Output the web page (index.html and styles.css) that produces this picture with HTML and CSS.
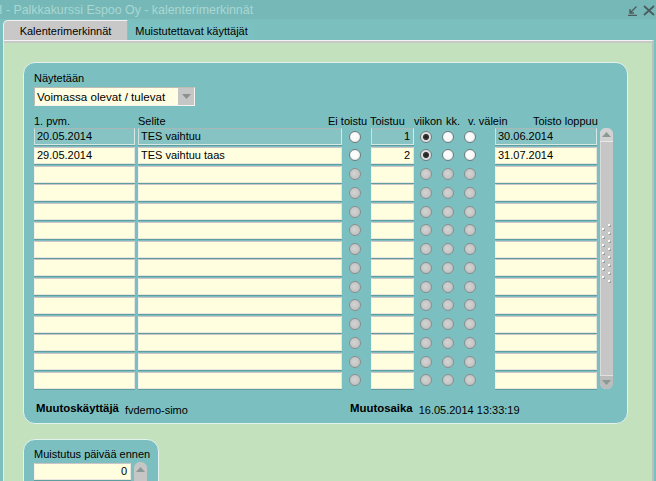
FILE: index.html
```html
<!DOCTYPE html>
<html lang="fi">
<head>
<meta charset="utf-8">
<title>Kalenterimerkinnät</title>
<link rel="stylesheet" href="styles.css">
</head>
<body>
<div class="titlebar">
  <span class="title">I - Palkkakurssi Espoo Oy - kalenterimerkinnät</span>
  <span class="controls">
    <svg class="ic-min" width="10" height="11" viewBox="0 0 10 11"><path d="M8.5 1.5 L2 8 M2 4 V8 H6 M0 10.5 H9" fill="none" stroke="#4c5c5c" stroke-width="1.4"/></svg>
    <svg class="ic-x" width="12" height="11" viewBox="0 0 12 11"><path d="M1 1 L11 10 M11 1 L1 10" fill="none" stroke="#4c5c5c" stroke-width="1.8"/></svg>
  </span>
</div>
<div class="tabs">
  <div class="tab active">Kalenterimerkinnät</div>
  <div class="tab">Muistutettavat käyttäjät</div>
</div>
<div class="main">
  <div class="panel">
    <div class="label">Näytetään</div>
    <div class="select"><span class="sel-text">Voimassa olevat / tulevat</span><span class="sel-btn"><svg width="9" height="5" viewBox="0 0 9 5"><path d="M0 0 H9 L4.5 5 Z" fill="#8c9090"/></svg></span></div>
    <div class="head">
      <span class="h1">1. pvm.</span><span class="h2">Selite</span><span class="h3">Ei toistu</span><span class="h4">Toistuu</span><span class="h5">viikon</span><span class="h6">kk.</span><span class="h7">v. välein</span><span class="h8">Toisto loppuu</span>
    </div>
    <div class="table">
      <div class="rows">
        <div class="row cur"><div class="f d">20.05.2014</div><div class="f s">TES vaihtuu</div><i class="r x"></i><div class="f n">1</div><i class="r v on"></i><i class="r k"></i><i class="r y"></i><div class="f l">30.06.2014</div></div>
        <div class="row"><div class="f d">29.05.2014</div><div class="f s">TES vaihtuu taas</div><i class="r x"></i><div class="f n">2</div><i class="r v on"></i><i class="r k"></i><i class="r y"></i><div class="f l">31.07.2014</div></div>
        <div class="row"><div class="f d"></div><div class="f s"></div><i class="r x e"></i><div class="f n"></div><i class="r v e"></i><i class="r k e"></i><i class="r y e"></i><div class="f l"></div></div>
        <div class="row"><div class="f d"></div><div class="f s"></div><i class="r x e"></i><div class="f n"></div><i class="r v e"></i><i class="r k e"></i><i class="r y e"></i><div class="f l"></div></div>
        <div class="row"><div class="f d"></div><div class="f s"></div><i class="r x e"></i><div class="f n"></div><i class="r v e"></i><i class="r k e"></i><i class="r y e"></i><div class="f l"></div></div>
        <div class="row"><div class="f d"></div><div class="f s"></div><i class="r x e"></i><div class="f n"></div><i class="r v e"></i><i class="r k e"></i><i class="r y e"></i><div class="f l"></div></div>
        <div class="row"><div class="f d"></div><div class="f s"></div><i class="r x e"></i><div class="f n"></div><i class="r v e"></i><i class="r k e"></i><i class="r y e"></i><div class="f l"></div></div>
        <div class="row"><div class="f d"></div><div class="f s"></div><i class="r x e"></i><div class="f n"></div><i class="r v e"></i><i class="r k e"></i><i class="r y e"></i><div class="f l"></div></div>
        <div class="row"><div class="f d"></div><div class="f s"></div><i class="r x e"></i><div class="f n"></div><i class="r v e"></i><i class="r k e"></i><i class="r y e"></i><div class="f l"></div></div>
        <div class="row"><div class="f d"></div><div class="f s"></div><i class="r x e"></i><div class="f n"></div><i class="r v e"></i><i class="r k e"></i><i class="r y e"></i><div class="f l"></div></div>
        <div class="row"><div class="f d"></div><div class="f s"></div><i class="r x e"></i><div class="f n"></div><i class="r v e"></i><i class="r k e"></i><i class="r y e"></i><div class="f l"></div></div>
        <div class="row"><div class="f d"></div><div class="f s"></div><i class="r x e"></i><div class="f n"></div><i class="r v e"></i><i class="r k e"></i><i class="r y e"></i><div class="f l"></div></div>
        <div class="row"><div class="f d"></div><div class="f s"></div><i class="r x e"></i><div class="f n"></div><i class="r v e"></i><i class="r k e"></i><i class="r y e"></i><div class="f l"></div></div>
        <div class="row"><div class="f d"></div><div class="f s"></div><i class="r x e"></i><div class="f n"></div><i class="r v e"></i><i class="r k e"></i><i class="r y e"></i><div class="f l"></div></div>
      </div>
      <div class="scrollbar">
        <span class="sb-up"><svg width="9" height="5" viewBox="0 0 9 5"><path d="M0 5 H9 L4.5 0 Z" fill="#8a9898"/></svg></span>
        <span class="sb-grip"><svg width="9" height="62" viewBox="0 0 9 62">
          <g fill="#8fa0a0"><rect x="1" y="7" width="2" height="2"/><rect x="1" y="15" width="2" height="2"/><rect x="1" y="23" width="2" height="2"/><rect x="1" y="31" width="2" height="2"/><rect x="1" y="39" width="2" height="2"/><rect x="1" y="47" width="2" height="2"/><rect x="1" y="55" width="2" height="2"/><rect x="7" y="3" width="2" height="2"/><rect x="7" y="11" width="2" height="2"/><rect x="7" y="19" width="2" height="2"/><rect x="7" y="27" width="2" height="2"/><rect x="7" y="35" width="2" height="2"/><rect x="7" y="43" width="2" height="2"/><rect x="7" y="51" width="2" height="2"/><rect x="7" y="59" width="2" height="2"/></g>
          <g fill="#ffffff"><rect x="0" y="6" width="2" height="2"/><rect x="0" y="14" width="2" height="2"/><rect x="0" y="22" width="2" height="2"/><rect x="0" y="30" width="2" height="2"/><rect x="0" y="38" width="2" height="2"/><rect x="0" y="46" width="2" height="2"/><rect x="0" y="54" width="2" height="2"/><rect x="6" y="2" width="2" height="2"/><rect x="6" y="10" width="2" height="2"/><rect x="6" y="18" width="2" height="2"/><rect x="6" y="26" width="2" height="2"/><rect x="6" y="34" width="2" height="2"/><rect x="6" y="42" width="2" height="2"/><rect x="6" y="50" width="2" height="2"/><rect x="6" y="58" width="2" height="2"/></g>
        </svg></span>
        <span class="sb-down"><svg width="9" height="5" viewBox="0 0 9 5"><path d="M0 0 H9 L4.5 5 Z" fill="#8a9898"/></svg></span>
      </div>
    </div>
    <div class="footer">
      <div class="fitem first"><b>Muutoskäyttäjä</b><span>fvdemo-simo</span></div>
      <div class="fitem"><b>Muutosaika</b><span>16.05.2014 13:33:19</span></div>
    </div>
  </div>
  <div class="panel small">
    <div class="label">Muistutus päivää ennen</div>
    <div class="spin-row">
      <div class="f days">0</div>
      <div class="spinner"><svg width="9" height="5" viewBox="0 0 9 5"><path d="M0 5 H9 L4.5 0 Z" fill="#8a9898"/></svg></div>
    </div>
  </div>
</div>
</body>
</html>
```

FILE: styles.css
```css
html, body {
  margin: 0;
  padding: 0;
}
body {
  width: 656px;
  height: 481px;
  overflow: hidden;
  background: #7bbfbf;
  font-family: "Liberation Sans", Arial, sans-serif;
  font-size: 11px;
  color: #000;
}
.titlebar {
  height: 19px;
  background: #75b8b7;
  display: flex;
  justify-content: space-between;
  align-items: center;
}
.title {
  color: #a9d7d3;
  font-size: 12.4px;
  margin-left: -1px;
  white-space: nowrap;
}
.controls {
  display: flex;
  align-items: center;
  gap: 5px;
  margin-right: 1px;
  padding-top: 1px;
}
.tabs {
  height: 21px;
  display: flex;
  align-items: flex-end;
  padding-left: 3px;
  gap: 2px;
}
.tab {
  box-sizing: border-box;
  height: 18px;
  width: 123px;
  text-align: center;
  line-height: 18px;
  background: #7cc1c1;
}
.tab.active {
  height: 20px;
  width: 125px;
  line-height: 20px;
  background: #c8c8c8;
  border-left: 1px solid #f2f2f2;
  border-top: 1px solid #f2f2f2;
  border-right: 1px solid #b0b0b0;
  border-top-left-radius: 5px;
}
.main {
  box-sizing: border-box;
  margin-left: 3px;
  margin-right: 2px;
  height: 441px;
  overflow: hidden;
  background: #c3e1bd;
  border-top: 1px solid #f4f4f4;
  border-left: 1px solid #e8ece8;
  border-right: 2px solid #b8c2bc;
  box-shadow: inset 0 2px 0 #c8c8c8;
  padding: 21px 0 0 19px;
}
.panel {
  box-sizing: border-box;
  width: 605px;
  height: 362px;
  background: #7bbfc0;
  border: 1px solid #e4f2ee;
  border-radius: 12px;
  padding: 8px 0 0 10px;
}
.label {
  height: 14px;
  line-height: 14px;
}
.select {
  box-sizing: border-box;
  margin-top: 2px;
  width: 161px;
  height: 19px;
  display: flex;
  background: #fffee2;
  border: 1px solid;
  border-color: #bcbcb4 #f4f4f0 #f4f4f0 #bcbcb4;
}
.sel-text {
  flex: 1;
  padding-left: 2px;
  line-height: 17px;
  font-size: 11.6px;
  white-space: nowrap;
}
.sel-btn {
  width: 16px;
  background: #c6c6c6;
  display: flex;
  align-items: center;
  justify-content: center;
}
.head {
  margin-top: 8px;
  height: 14px;
  line-height: 14px;
  display: flex;
  white-space: nowrap;
}
.h1 { width: 104px; }
.h2 { width: 190px; }
.h3 { width: 42px; }
.h4 { width: 44px; }
.h5 { width: 32px; }
.h6 { width: 22px; }
.h7 { width: 65px; }
.table {
  display: flex;
  align-items: flex-start;
}
.rows {
  display: flex;
  flex-direction: column;
  gap: 1.77px;
}
.row {
  display: flex;
  align-items: center;
  height: 17px;
}
.f {
  box-sizing: border-box;
  height: 17px;
  line-height: 15px;
  padding-left: 2px;
  white-space: nowrap;
  overflow: hidden;
  background: #ffffdf;
  border: 1px solid;
  border-color: #cdc4c8 #e6e6dc #e6e6dc #f2f2ea;
  box-shadow: 0 1px 0 #5f9e9e;
}
.row.cur .f {
  background: #87c3c3;
  border-color: #a8b8b8 #d8e8e4 #d8e8e4 #d0e0dc;
}
.d { width: 101px; }
.s { width: 204px; margin-left: 3px; }
.n { width: 43px; margin-left: 10px; text-align: right; padding-right: 3px; }
.l { width: 102px; margin-left: 19px; }
.r {
  display: block;
  box-sizing: border-box;
  width: 12px;
  height: 12px;
  border-radius: 50%;
  border: 1px solid #6f7c7c;
  background: radial-gradient(circle at 45% 45%, #ffffff 0, #fafafa 45%, #d8dcdc 100%);
}
.r.on {
  background: radial-gradient(circle at 50% 50%, #1c1c1c 0, #3a3a3a 38%, #d8d8d8 48%, #ffffff 100%);
}
.r.e {
  border-color: #86908f;
  background: radial-gradient(circle at 45% 45%, #d4d4d4 0, #c4c4c4 60%, #b4b8b8 100%);
}
.x { margin-left: 7px; }
.v { margin-left: 6px; }
.k { margin-left: 10px; }
.y { margin-left: 10px; }
.scrollbar {
  margin-left: 3px;
  width: 13px;
  height: 261px;
  background: #c6c6c6;
  border-radius: 6px;
  display: flex;
  flex-direction: column;
  align-items: center;
  justify-content: space-between;
  box-shadow: inset 1px 0 0 #dadada;
}
.sb-up, .sb-down {
  display: flex;
  align-items: center;
  justify-content: center;
  width: 13px;
  height: 13px;
}
.sb-up {
  background: #d2d2d2;
  border-radius: 6px 6px 0 0;
  box-shadow: 0 1px 0 #e8e8e8;
}
.sb-down {
  border-top: 1px solid #e0e0e0;
  border-radius: 0 0 6px 6px;
  background: #bcbcbc;
}
.sb-grip {
  display: flex;
  margin-bottom: 10px;
}
.footer {
  margin-top: 12px;
  padding-left: 2px;
  display: flex;
  align-items: center;
  height: 13px;
  white-space: nowrap;
}
.fitem {
  display: flex;
  align-items: flex-end;
  gap: 6px;
}
.fitem.first { width: 314px; }
.fitem b {
  font-size: 11.4px;
}
.fitem span {
  line-height: 12px;
  margin-bottom: -2px;
}
.panel.small {
  margin-top: 15px;
  width: 136px;
  height: 80px;
  padding-top: 7px;
}
.spin-row {
  display: flex;
  align-items: flex-start;
  margin-top: 2px;
}
.days {
  width: 97px;
  text-align: right;
  padding-right: 3px;
}
.spinner {
  margin-left: 3px;
  margin-top: -1px;
  width: 13px;
  height: 24px;
  background: #c6c6c6;
  border-radius: 6px 6px 0 0;
  display: flex;
  justify-content: center;
  padding-top: 5px;
  box-sizing: border-box;
}
```
